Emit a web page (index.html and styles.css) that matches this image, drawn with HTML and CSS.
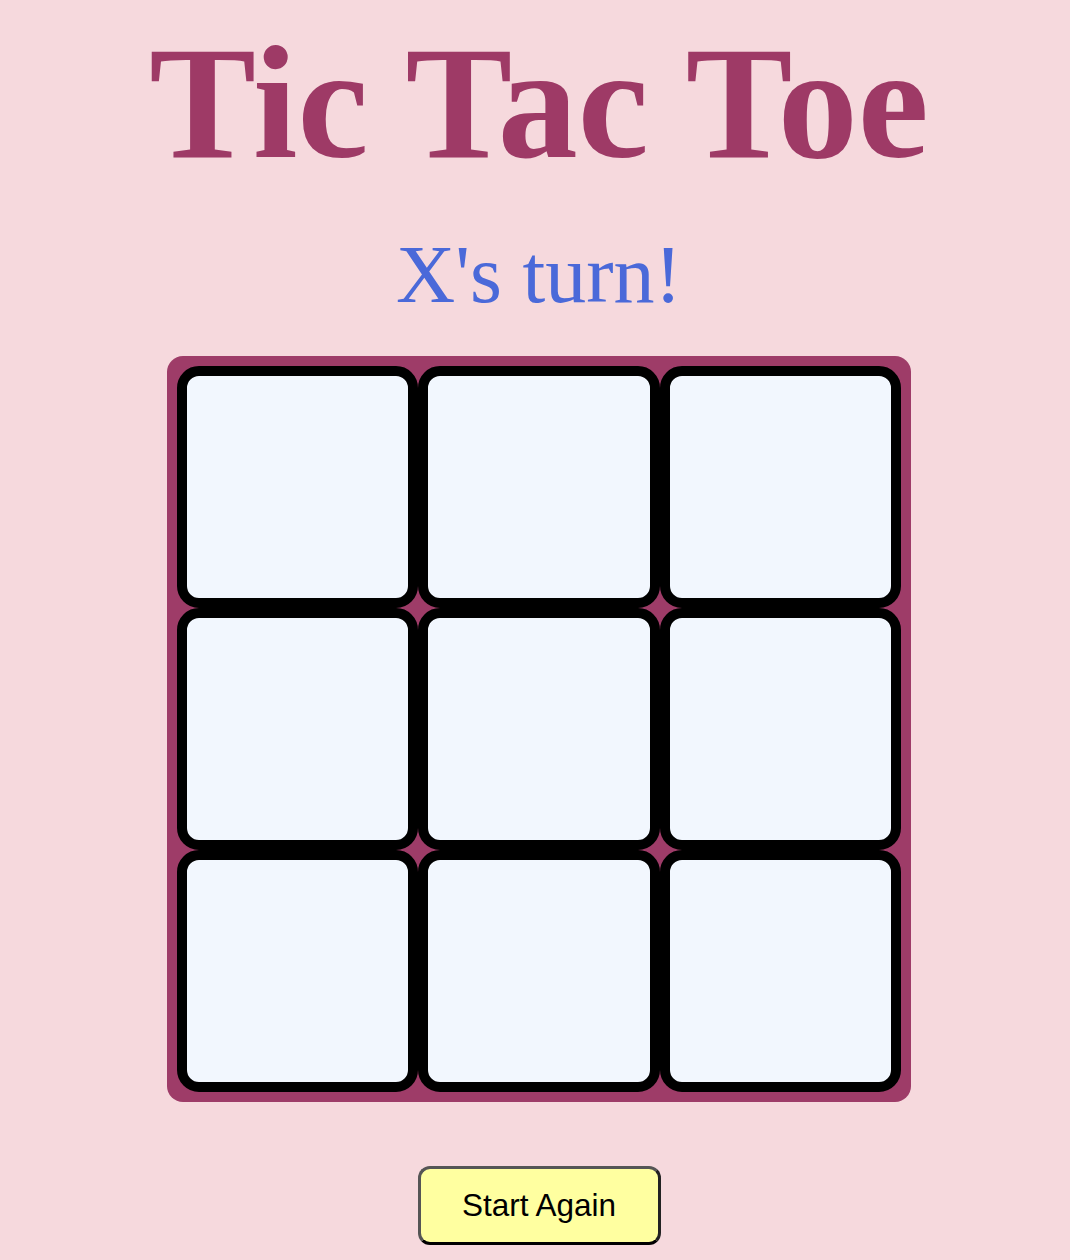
FILE: index.html
```html
<!DOCTYPE html>
<html lang="en">
<head>
<meta charset="utf-8">
<title>Tic Tac Toe</title>
<link rel="stylesheet" href="styles.css">
</head>
<body>
<main class="game">
  <h1 class="title">Tic Tac Toe</h1>
  <p class="status">X's turn!</p>
  <div class="board">
    <div class="cell"></div>
    <div class="cell"></div>
    <div class="cell"></div>
    <div class="cell"></div>
    <div class="cell"></div>
    <div class="cell"></div>
    <div class="cell"></div>
    <div class="cell"></div>
    <div class="cell"></div>
  </div>
  <button class="restart" type="button">Start Again</button>
</main>
</body>
</html>
```
FILE: styles.css
```css
html, body {
  margin: 0;
  padding: 0;
  background: #f6d9dd;
}
.game {
  display: flex;
  flex-direction: column;
  align-items: center;
  padding: 23px 0 0 8px;
}
.title {
  margin: 0;
  font-family: "Liberation Serif", "Times New Roman", serif;
  font-weight: bold;
  font-size: 160px;
  line-height: 1;
  color: #9e3a66;
}
.status {
  margin: 51px 0 0;
  font-family: "Liberation Serif", "Times New Roman", serif;
  font-size: 82px;
  line-height: 1;
  color: #4a69d9;
}
.board {
  margin-top: 40px;
  width: 744px;
  box-sizing: border-box;
  padding: 10px;
  background: #9e3c68;
  border-radius: 16px;
  display: grid;
  grid-template-columns: repeat(3, 1fr);
  grid-template-rows: repeat(3, 242px);
}
.cell {
  box-sizing: border-box;
  border: 10px solid #000;
  border-radius: 22px;
  background: #f2f7fe;
}
.restart {
  margin-top: 64px;
  width: 243px;
  height: 79px;
  box-sizing: border-box;
  border: 3px solid;
  border-color: #555 #222 #000 #555;
  border-radius: 12px;
  background: #ffffa0;
  font-family: "Liberation Sans", Arial, sans-serif;
  font-size: 31.5px;
  color: #000;
  padding: 0;
}
```
